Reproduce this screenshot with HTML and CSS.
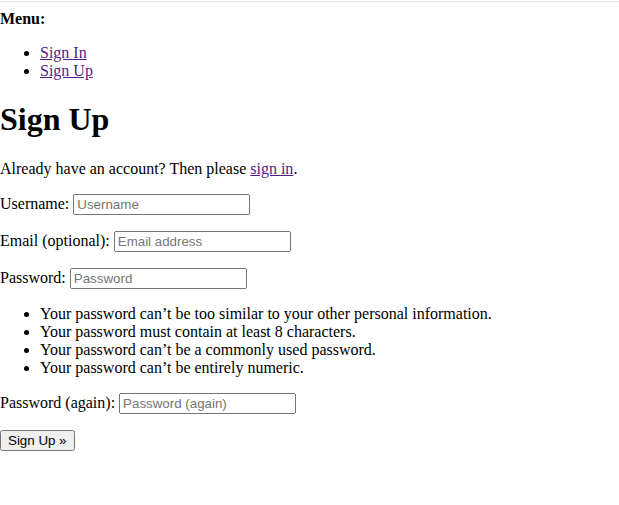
FILE: index.html
```html
<!DOCTYPE html>
<html>
<head>
<meta charset="utf-8">
<title>Signup</title>
<link rel="stylesheet" href="styles.css">
</head>
<body>
<div class="topline"></div>
<div class="menu">
  <strong>Menu:</strong>
  <ul>
    <li><a href="#">Sign In</a></li>
    <li><a href="#">Sign Up</a></li>
  </ul>
</div>
<h1>Sign Up</h1>
<p>Already have an account? Then please <a href="#">sign in</a>.</p>
<form class="signup">
  <p><label for="id_username">Username:</label> <input type="text" id="id_username" class="field" placeholder="Username"></p>
  <p><label for="id_email">Email (optional):</label> <input type="email" id="id_email" class="field" placeholder="Email address"></p>
  <p><label for="id_password1">Password:</label> <input type="password" id="id_password1" class="field" placeholder="Password"></p>
  <ul>
    <li>Your password can’t be too similar to your other personal information.</li>
    <li>Your password must contain at least 8 characters.</li>
    <li>Your password can’t be a commonly used password.</li>
    <li>Your password can’t be entirely numeric.</li>
  </ul>
  <p><label for="id_password2">Password (again):</label> <input type="password" id="id_password2" class="field" placeholder="Password (again)"></p>
  <p><button type="submit" class="btn">Sign Up »</button></p>
</form>
</body>
</html>
```
FILE: styles.css
```css
html, body {
  background: #fff;
}
body {
  margin: 0;
  font-family: "Liberation Serif", "Times New Roman", serif;
  font-size: 16px;
  color: #000;
}
.topline {
  margin-top: 1px;
  border-top: 1px solid #e6e6e6;
}
.menu {
  padding-top: 8px;
}
ul {
  margin: 16px 0;
  padding-left: 40px;
}
h1 {
  font-size: 32px;
  margin: 21.44px 0;
}
p {
  margin: 16px 0;
}
a {
  color: #551a8b;
}
.field {
  font-family: "Liberation Sans", Arial, sans-serif;
  font-size: 13.333px;
  width: 177px;
  box-sizing: border-box;
}
.btn {
  font-family: "Liberation Sans", Arial, sans-serif;
  font-size: 13.333px;
}
```
